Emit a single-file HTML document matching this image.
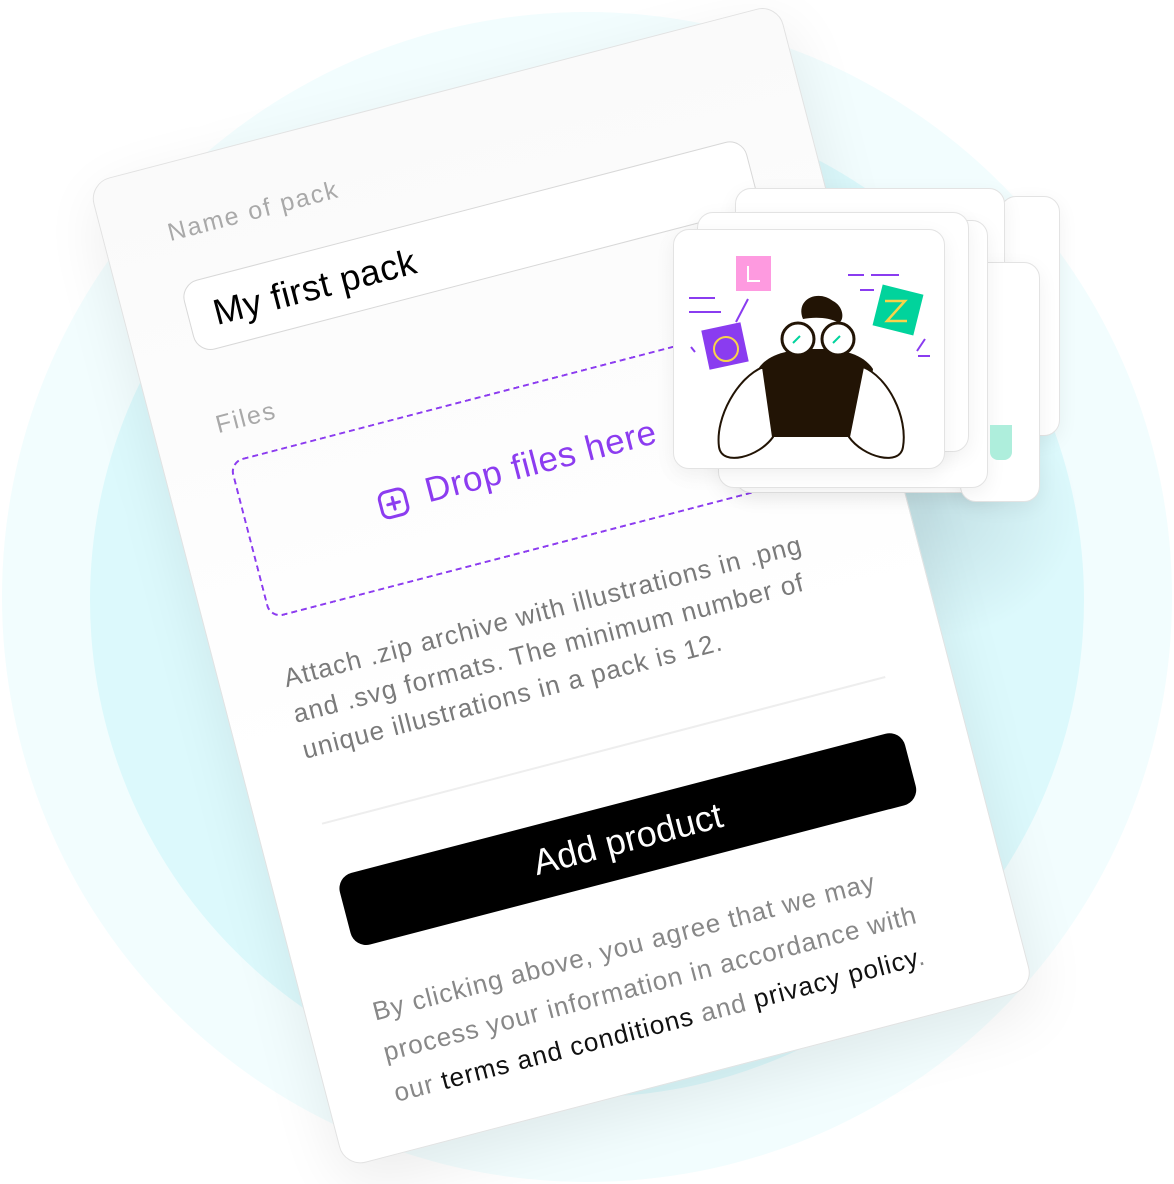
<!DOCTYPE html>
<html><head><meta charset="utf-8"><style>
html,body{margin:0;padding:0;}
body{width:1174px;height:1184px;position:relative;overflow:hidden;background:#fff;font-family:"Liberation Sans",sans-serif;}
.c1{position:absolute;left:2px;top:12px;width:1170px;height:1170px;border-radius:50%;background:#f2fdfe;}
.c2{position:absolute;left:90px;top:103px;width:994px;height:994px;border-radius:50%;background:#dcf9fc;}
.card{position:absolute;left:88px;top:183px;width:713px;height:1018px;transform-origin:0 0;transform:rotate(-14.6deg);background:linear-gradient(#fafafa,#fff 60%);border:1.5px solid #e2e2e2;border-radius:22px;box-shadow:0 20px 60px rgba(0,0,0,0.08);box-sizing:border-box;}
.abs{position:absolute;white-space:nowrap;}
.lbl{font-size:25px;color:#a9a9a9;letter-spacing:1.8px;}
.inp{left:62px;top:120px;width:582px;height:72px;border:1.5px solid #d8d8d8;border-radius:18px;box-sizing:border-box;background:#fff;}
.drop{left:65px;top:304px;width:582px;height:163px;border:2px dashed #8c3cf0;border-radius:14px;box-sizing:border-box;}
.desc{left:64px;top:510px;font-size:26px;line-height:37px;color:#7a7a7a;letter-spacing:1px;}
.btn{left:64px;top:733px;width:584px;height:74px;background:#000;border-radius:16px;color:#fff;font-size:36px;text-align:center;line-height:74px;}
.foot{left:66px;top:852px;font-size:26px;line-height:42px;color:#888;letter-spacing:1px;}
.foot b{font-weight:normal;color:#111;}
.ic{position:absolute;background:#fff;border:1.5px solid #e3e3e3;border-radius:16px;box-sizing:border-box;box-shadow:0 6px 20px rgba(0,0,0,0.06);}
</style></head><body>
<div class="c1"></div><div class="c2"></div>
<div style="position:absolute;left:780px;top:380px;width:300px;height:260px;border-radius:50%;background:radial-gradient(rgba(120,150,160,0.25),rgba(120,150,160,0) 70%);"></div>
<div class="card">
  <div class="abs lbl" style="left:64px;top:54px;">Name of pack</div>
  <div class="abs inp"></div>
  <div class="abs" style="left:88px;top:136px;font-size:36px;color:#000;letter-spacing:0.5px;">My first pack</div>
  <div class="abs lbl" style="left:62px;top:252px;">Files</div>
  <div class="abs drop"></div>
  <svg class="abs" style="left:198px;top:370px" width="32" height="32" viewBox="0 0 32 32"><rect x="3" y="3" width="26" height="26" rx="7" fill="none" stroke="#8c3cf0" stroke-width="3"/><path d="M16 10v12M10 16h12" stroke="#8c3cf0" stroke-width="3" stroke-linecap="round"/></svg>
  <div class="abs" style="left:248px;top:363px;font-size:35px;color:#8c3cf0;letter-spacing:0.7px;">Drop files here</div>
  <div class="abs desc">Attach .zip archive with illustrations in .png<br>and .svg formats. The minimum number of<br>unique illustrations in a pack is 12.</div>
  <div class="abs" style="left:64px;top:677px;width:582px;height:1.5px;background:#eee;"></div>
  <div class="abs btn">Add product</div>
  <div class="abs foot">By clicking above, you agree that we may<br>process your information in accordance with<br>our <b>terms and conditions</b> and <b>privacy policy</b>.</div>
</div>
<div class="ic" style="left:1000px;top:196px;width:60px;height:240px;"></div>
<div class="ic" style="left:735px;top:188px;width:270px;height:305px;"></div>
<div class="ic" style="left:960px;top:262px;width:80px;height:240px;"></div>
<div class="ic" style="left:718px;top:220px;width:270px;height:268px;"></div>
<div class="ic" style="left:697px;top:212px;width:272px;height:240px;"></div>
<div style="position:absolute;left:990px;top:425px;width:22px;height:35px;background:#aeeedc;border-radius:0 0 8px 8px"></div>
<div class="ic" style="left:673px;top:229px;width:272px;height:240px;"></div>
<svg style="position:absolute;left:673px;top:229px" width="272" height="240" viewBox="0 0 272 240">
  <rect x="63" y="27" width="35" height="35" fill="#fe9ae0"/>
  <path d="M75 37v15h12" stroke="#fff" stroke-width="2" fill="none"/>
  <path d="M16 69h26M16 83h32M75 70l-12 23" stroke="#8a3cf0" stroke-width="2"/>
  <rect x="32" y="97" width="40" height="40" fill="#8a3cf0" transform="rotate(-12 52 117)"/>
  <circle cx="53" cy="120" r="12" fill="none" stroke="#f8d34a" stroke-width="2"/>
  <path d="M175 46h16M198 46h28M187 61h14M245 127h12M18 118l4 5M252 110l-8 12" stroke="#8a3cf0" stroke-width="2"/>
  <rect x="204" y="60" width="42" height="42" fill="#01d39c" transform="rotate(14 225 81)"/>
  <path d="M212 72h20l-18 20h20" stroke="#f8d34a" stroke-width="2.5" fill="none"/>
  <path d="M130 90c-8-20 15-30 30-18c10 5 12 18 6 22c-10-6-25-6-36-4z" fill="#221405"/>
  <path d="M85 140c10-15 30-20 60-20c25 0 45 5 55 20l-10 68h-90z" fill="#221405"/>
  <path d="M100 208l-10-70c-25 10-48 50-44 80c3 20 40 10 54-10zM176 208l14-70c25 10 45 50 40 80c-3 20-40 10-54-10z" fill="#fff" stroke="#221405" stroke-width="2"/>
  <circle cx="125" cy="110" r="16" fill="#fff" stroke="#221405" stroke-width="3"/>
  <circle cx="165" cy="110" r="16" fill="#fff" stroke="#221405" stroke-width="3"/>
  <path d="M120 114l7-7M160 114l7-7" stroke="#01d39c" stroke-width="2"/>
</svg>
</body></html>
